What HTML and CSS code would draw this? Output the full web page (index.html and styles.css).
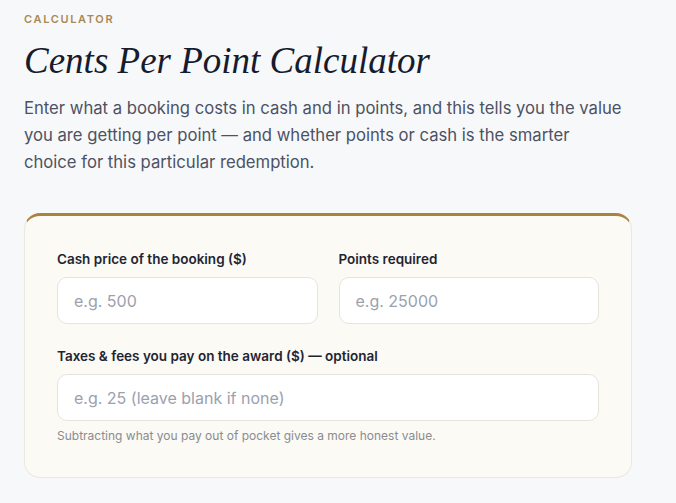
FILE: index.html
```html
<!DOCTYPE html>
<html lang="en">
<head>
    <meta charset="UTF-8">
    <meta name="viewport" content="width=device-width, initial-scale=1.0">
    <title>Cents Per Point Calculator</title>
    <link rel="stylesheet" href="styles.css">
</head>
<body>
    <main class="page">
        <p class="eyebrow">Calculator</p>
        <h1 class="title">Cents Per Point Calculator</h1>
        <p class="intro">Enter what a booking costs in cash and in points, and this tells you the value you are getting per point — and whether points or cash is the smarter choice for this particular redemption.</p>

        <!-- Calculator form -->
        <section class="calc-card">
            <div class="field-row">
                <div class="field">
                    <label for="cash-price">Cash price of the booking ($)</label>
                    <input type="text" id="cash-price" placeholder="e.g. 500">
                </div>
                <div class="field">
                    <label for="points">Points required</label>
                    <input type="text" id="points" placeholder="e.g. 25000">
                </div>
            </div>
            <div class="field">
                <label for="taxes">Taxes &amp; fees you pay on the award ($) — optional</label>
                <input type="text" id="taxes" placeholder="e.g. 25 (leave blank if none)">
                <p class="hint">Subtracting what you pay out of pocket gives a more honest value.</p>
            </div>
        </section>
    </main>
</body>
</html>
```

FILE: styles.css
```css
* {
    margin: 0;
    padding: 0;
    box-sizing: border-box;
}
body {
    font-family: Inter, "Noto Sans", sans-serif;
    background-color: #f7f8fa;
    color: #1f2433;
}
.page {
    padding: 12px 24px 0;
    width: 656px;
}
.eyebrow {
    font-size: 11px;
    font-weight: 600;
    letter-spacing: 0.15em;
    text-transform: uppercase;
    color: #a88a55;
    line-height: 14px;
}
.title {
    font-family: "Liberation Serif", "Times New Roman", serif;
    font-style: italic;
    font-weight: 400;
    font-size: 37px;
    line-height: 46px;
    color: #161b2e;
    margin-top: 12px;
}
.intro {
    font-size: 16.65px;
    line-height: 27px;
    color: #4c5263;
    margin-top: 11px;
    max-width: 600px;
}

/* Card */
.calc-card {
    width: 608px;
    margin-top: 37px;
    background-color: #fbfaf5;
    border: 1px solid #ebe8e0;
    border-top: 3px solid #a8843f;
    border-radius: 16px;
    padding: 34px 32px 33px;
}
.field-row {
    display: grid;
    grid-template-columns: 1fr 1fr;
    gap: 21px;
    margin-bottom: 23px;
}
.field {
    display: flex;
    flex-direction: column;
    min-width: 0;
}
.field label {
    font-size: 13.5px;
    font-weight: 600;
    color: #1f2433;
    line-height: 18px;
    margin-bottom: 9px;
}
.field input {
    width: 100%;
    min-width: 0;
    height: 47px;
    border: 1px solid #e6e4df;
    border-radius: 10px;
    background-color: #fff;
    padding: 0 16px;
    font-family: Inter, "Noto Sans", sans-serif;
    font-size: 16px;
    color: #1f2433;
    outline: none;
}
.field input::placeholder {
    color: #9ba1ae;
}
.hint {
    font-size: 12px;
    color: #8a8c92;
    line-height: 16px;
    margin-top: 7px;
}
```
